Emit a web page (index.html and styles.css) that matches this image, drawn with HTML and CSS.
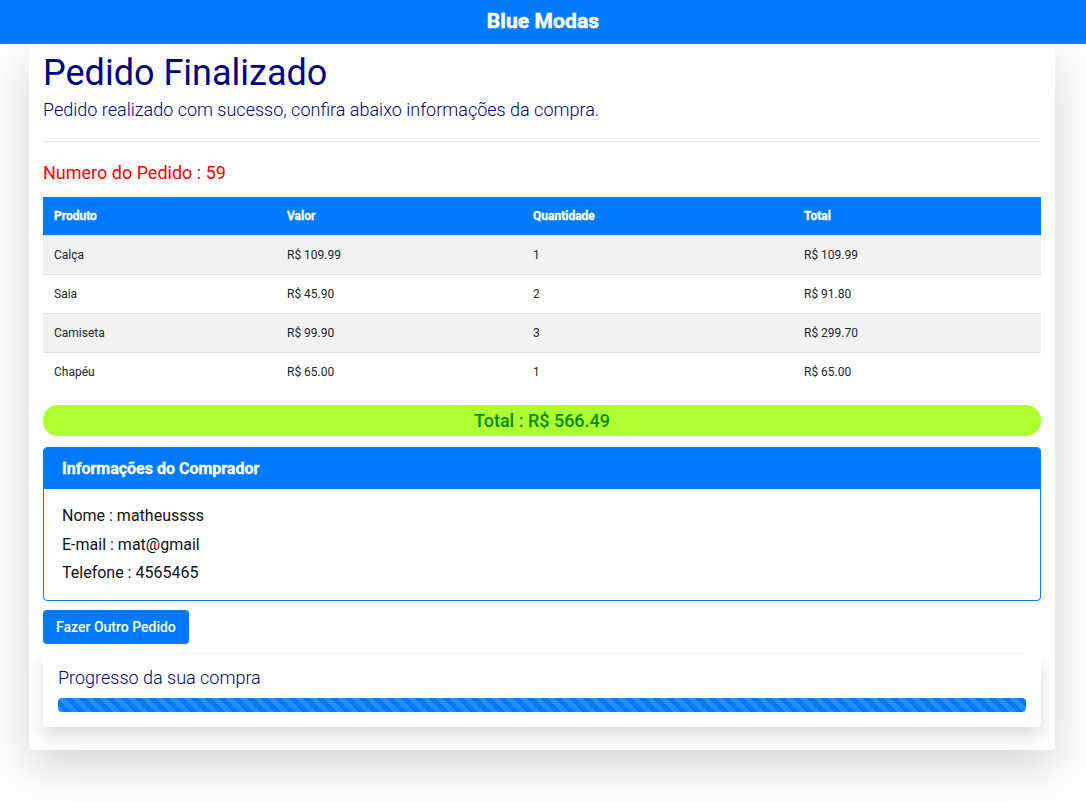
FILE: index.html
```html
<!DOCTYPE html>
<html lang="pt-BR">
<head>
<meta charset="utf-8">
<title>Blue Modas</title>
<link rel="stylesheet" href="styles.css">
</head>
<body>
<header class="navbar">Blue Modas</header>
<main class="container">
  <h1 class="title">Pedido Finalizado</h1>
  <p class="lead">Pedido realizado com sucesso, confira abaixo informações da compra.</p>
  <hr class="divider">
  <h2 class="order-number">Numero do Pedido : 59</h2>
  <table class="items">
    <thead>
      <tr><th class="c1">Produto</th><th class="c2">Valor</th><th class="c3">Quantidade</th><th>Total</th></tr>
    </thead>
    <tbody>
      <tr><td>Calça</td><td>R$ 109.99</td><td>1</td><td>R$ 109.99</td></tr>
      <tr><td>Saia</td><td>R$ 45.90</td><td>2</td><td>R$ 91.80</td></tr>
      <tr><td>Camiseta</td><td>R$ 99.90</td><td>3</td><td>R$ 299.70</td></tr>
      <tr><td>Chapéu</td><td>R$ 65.00</td><td>1</td><td>R$ 65.00</td></tr>
    </tbody>
  </table>
  <div class="total">Total : R$ 566.49</div>
  <section class="buyer">
    <div class="buyer-header">Informações do Comprador</div>
    <div class="buyer-body">
      <p>Nome : matheussss</p>
      <p>E-mail : mat@gmail</p>
      <p>Telefone : 4565465</p>
    </div>
  </section>
  <button class="btn">Fazer Outro Pedido</button>
  <section class="progress-card">
    <p class="progress-title">Progresso da sua compra</p>
    <div class="progress"><div class="progress-bar"></div></div>
  </section>
</main>
</body>
</html>
```
FILE: styles.css
```css
* { box-sizing: border-box; }
html, body { margin: 0; padding: 0; }
body {
  font-family: Roboto, "Liberation Sans", sans-serif;
  background: #fff;
  color: #212529;
}
.navbar {
  position: relative;
  z-index: 2;
  height: 44px;
  background: #007bff;
  color: #fff;
  font-weight: 700;
  font-size: 21px;
  -webkit-text-stroke: 0.5px #fff;
  letter-spacing: 0.1px;
  display: flex;
  align-items: center;
  justify-content: center;
  padding-bottom: 2px;
}
.container {
  width: 1026px;
  margin: 0 31px 52px 29px;
  background: #fff;
  padding: 8px 14px 23px;
  border-radius: 0 0 4px 4px;
  box-shadow: 0 16px 48px rgba(0, 0, 0, 0.175);
}
.title {
  margin: 0;
  font-size: 36px;
  font-weight: 400;
  color: #000080;
  line-height: 42px;
}
.lead {
  margin: 4px 0 0;
  font-size: 18px;
  font-weight: 300;
  color: #000080;
  line-height: 24px;
}
.divider {
  margin: 19px 0 0;
  border: 0;
  border-top: 1px solid #e3e3e3;
}
.order-number {
  margin: 20px 0 0;
  font-size: 18px;
  font-weight: 400;
  color: #ff0000;
  line-height: 22px;
}
.items {
  margin-top: 13px;
  width: 998px;
  border-collapse: collapse;
  font-size: 12px;
}
.items th, .items td {
  text-align: left;
  padding: 0 11px;
  height: 39px;
}
.items th {
  background: #007bff;
  color: #fff;
  font-weight: 700;
  -webkit-text-stroke: 0.3px #fff;
  height: 38px;
}
.items .c1 { width: 233px; }
.items .c2 { width: 246px; }
.items .c3 { width: 271px; }
.items td { border-top: 1px solid #dee2e6; color: #212529; }
.items tbody tr:nth-child(odd) td { background: #f2f2f2; }
.total {
  margin-top: 14px;
  height: 31px;
  border-radius: 15px;
  background: #adff2f;
  color: #0a8a0a;
  font-size: 18px;
  font-weight: 500;
  display: flex;
  align-items: center;
  justify-content: center;
}
.buyer {
  margin-top: 11px;
  border: 1px solid #007bff;
  border-radius: 4px;
  overflow: hidden;
}
.buyer-header {
  background: #007bff;
  color: #fff;
  font-weight: 700;
  -webkit-text-stroke: 0.3px #fff;
  font-size: 16px;
  height: 41px;
  display: flex;
  align-items: center;
  padding: 0 18px;
}
.buyer-body {
  padding: 13px 18px 12px;
  font-size: 16px;
  color: #111;
}
.buyer-body p { margin: 0; line-height: 28.5px; }
.btn {
  display: block;
  margin-top: 9px;
  height: 34px;
  padding: 0 13px;
  border: 0;
  border-radius: 4px;
  background: #007bff;
  color: #fff;
  font-family: inherit;
  font-size: 14px;
  font-weight: 500;
}
.progress-card {
  margin-top: 11px;
  background: #fff;
  border-radius: 4px;
  padding: 12px 15px 15px;
  box-shadow: 0 8px 16px rgba(0, 0, 0, 0.15);
}
.progress-title {
  margin: 0;
  font-size: 18px;
  font-weight: 300;
  color: #000080;
  line-height: 22px;
}
.progress {
  margin-top: 9px;
  height: 14px;
  border-radius: 4px;
  background: #e9ecef;
  overflow: hidden;
}
.progress-bar {
  height: 100%;
  width: 100%;
  background-color: #007bff;
  background-image: linear-gradient(45deg, rgba(255,255,255,.15) 25%, transparent 25%, transparent 50%, rgba(255,255,255,.15) 50%, rgba(255,255,255,.15) 75%, transparent 75%, transparent);
  background-size: 14px 14px;
}
```
